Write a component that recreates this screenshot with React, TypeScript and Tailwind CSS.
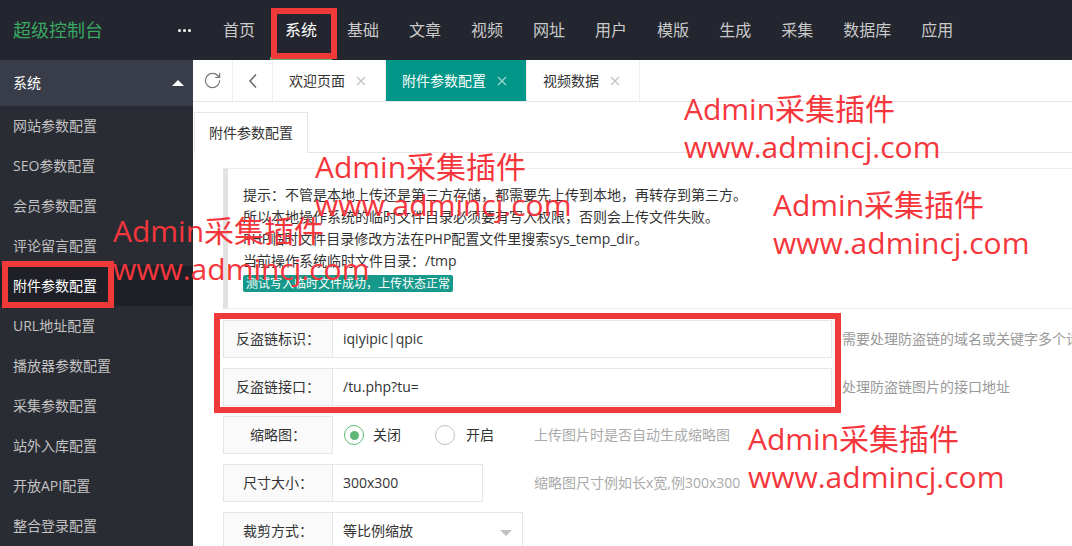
import { RotateCw } from "lucide-react";

// 顶部导航
const NAV_ITEMS = ["首页", "系统", "基础", "文章", "视频", "网址", "用户", "模版", "生成", "采集", "数据库", "应用"];

// 左侧菜单
const SIDE_ITEMS = [
  "网站参数配置",
  "SEO参数配置",
  "会员参数配置",
  "评论留言配置",
  "附件参数配置",
  "URL地址配置",
  "播放器参数配置",
  "采集参数配置",
  "站外入库配置",
  "开放API配置",
  "整合登录配置",
];

const TABS = ["欢迎页面", "附件参数配置", "视频数据"];

const NOTICE_LINES = [
  "提示：不管是本地上传还是第三方存储，都需要先上传到本地，再转存到第三方。",
  "所以本地操作系统的临时文件目录必须要有写入权限，否则会上传文件失败。",
  "PHP临时文件目录修改方法在PHP配置文件里搜索sys_temp_dir。",
  "当前操作系统临时文件目录：/tmp",
];

function CloseIcon({ className }: { className: string }) {
  return (
    <svg width="10" height="10" viewBox="0 0 10 10" className={className}>
      <path d="M1 1L9 9M9 1L1 9" stroke="currentColor" strokeWidth="1.3" fill="none" />
    </svg>
  );
}

function FieldLabel({ children }: { children: string }) {
  return (
    <div className="h-full w-[110px] shrink-0 border border-[#e6e6e6] bg-[#fafafa] text-center leading-[36px] text-[#333]">
      {children}
    </div>
  );
}

/** 红色水印文字 */
function Watermark({ className }: { className: string }) {
  return (
    <div
      className={`pointer-events-none absolute whitespace-nowrap font-['Open_Sans','Noto_Sans_CJK_SC',sans-serif] text-[30px] leading-[38px] text-[#f5363c] ${className}`}
    >
      <div>Admin采集插件</div>
      <div>www.admincj.com</div>
    </div>
  );
}

export default function App() {
  return (
    <div className="relative h-[546px] w-[1072px] overflow-hidden bg-white font-['Open_Sans','Noto_Sans_CJK_SC',sans-serif] text-[14px] leading-[20px] text-[#333]">
      {/* 顶部栏 */}
      <header className="flex h-[60px] items-center bg-[#23262e]">
        <div className="w-[170px] pl-[13px] text-[18px] leading-[24px] text-[#3aa862]">超级控制台</div>
        <div className="flex w-[28px] justify-center gap-[2px]">
          <span className="h-[3px] w-[3px] rounded-full bg-white" />
          <span className="h-[3px] w-[3px] rounded-full bg-white" />
          <span className="h-[3px] w-[3px] rounded-full bg-white" />
        </div>
        <nav className="ml-[10px] flex h-full">
          {NAV_ITEMS.map((item) => (
            <div
              key={item}
              className={`relative flex h-full items-center px-[15px] text-[16px] leading-[22px] ${
                item === "系统" ? "text-white" : "text-[#c9c9c9]"
              }`}
            >
              {item}
              {item === "系统" && <span className="absolute bottom-0 left-0 h-[3px] w-full bg-[#5fb878]" />}
            </div>
          ))}
        </nav>
      </header>

      <div className="flex h-[486px]">
        {/* 侧边栏 */}
        <aside className="w-[193px] shrink-0 bg-[#2a2c34]">
          <div className="flex h-[46px] items-center justify-between bg-[#393d49] pl-[13px] pr-[9px] text-white">
            <span>系统</span>
            <span className="h-0 w-0 border-x-[6px] border-b-[6px] border-x-transparent border-b-white" />
          </div>
          {SIDE_ITEMS.map((item) => (
            <div
              key={item}
              className={`flex h-[40px] items-center pl-[13px] ${
                item === "附件参数配置" ? "bg-[#1f2027] text-white" : "text-[#c2c2c2]"
              }`}
            >
              {item}
            </div>
          ))}
        </aside>

        <main className="min-w-0 flex-1 overflow-hidden">
          {/* 标签栏 */}
          <div className="flex h-[42px] border-b border-[#e6e6e6]">
            <div className="flex w-[40px] items-center justify-center border-r border-[#eee] text-[#777]">
              <RotateCw size={19} strokeWidth={1.5} />
            </div>
            <div className="flex w-[40px] items-center justify-center border-r border-[#eee] text-[#666]">
              <svg width="12" height="16" viewBox="0 0 12 16">
                <path d="M9 1.5L3 8l6 6.5" stroke="currentColor" strokeWidth="1.5" fill="none" />
              </svg>
            </div>
            {TABS.map((tab) => {
              const active = tab === "附件参数配置";
              return (
                <div
                  key={tab}
                  className={`flex items-center border-r border-[#eee] pl-[16px] pr-[19px] ${
                    active ? "bg-[#009688] text-white" : "text-[#333]"
                  }`}
                >
                  <span>{tab}</span>
                  <CloseIcon className={`ml-[11px] ${active ? "text-[#9fd6cf]" : "text-[#c2c2c2]"}`} />
                </div>
              );
            })}
          </div>

          <div className="pl-[1px] pt-[10px]">
            <div className="flex">
              <div className="h-[41px] border border-b-0 border-[#e6e6e6] px-[14px] leading-[40px]">附件参数配置</div>
              <div className="flex-1 border-b border-[#e6e6e6]" />
            </div>

            {/* 提示框 */}
            <div className="ml-[29px] mr-[-40px] mt-[15px] border border-l-[5px] border-[#eee] border-l-[#e2e2e2] pb-[16px] pl-[15px] pt-[15px] leading-[22px]">
              {NOTICE_LINES.map((line) => (
                <div key={line} className="whitespace-nowrap">
                  {line}
                </div>
              ))}
              <div className="mt-[3px] flex">
                <span className="rounded-[2px] bg-[#16998a] px-[3px] text-[12px] leading-[17px] text-white">
                  测试写入临时文件成功，上传状态正常
                </span>
              </div>
            </div>

            {/* 表单 */}
            <div className="ml-[29px] mt-[11px] flex flex-col gap-[10px]">
              <div className="flex h-[38px] items-center">
                <FieldLabel>反盗链标识：</FieldLabel>
                <div className="h-full w-[499px] shrink-0 border border-l-0 border-[#e6e6e6] pl-[10px] leading-[36px]">
                  iqiyipic|qpic
                </div>
                <div className="ml-[10px] whitespace-nowrap text-[#999]">需要处理防盗链的域名或关键字多个请用|连接</div>
              </div>
              <div className="flex h-[38px] items-center">
                <FieldLabel>反盗链接口：</FieldLabel>
                <div className="h-full w-[499px] shrink-0 border border-l-0 border-[#e6e6e6] pl-[10px] leading-[36px]">
                  /tu.php?tu=
                </div>
                <div className="ml-[10px] whitespace-nowrap text-[#999]">处理防盗链图片的接口地址</div>
              </div>
              <div className="flex h-[38px] items-center">
                <FieldLabel>缩略图：</FieldLabel>
                <div className="flex w-[201px] shrink-0 items-center pl-[11px]">
                  <span className="flex h-[20px] w-[20px] items-center justify-center rounded-full border border-[#5fb878]">
                    <span className="h-[9px] w-[9px] rounded-full bg-[#5fb878]" />
                  </span>
                  <span className="ml-[9px]">关闭</span>
                  <span className="ml-[34px] h-[20px] w-[20px] rounded-full border border-[#c2c2c2]" />
                  <span className="ml-[11px]">开启</span>
                </div>
                <div className="whitespace-nowrap text-[#aaa]">上传图片时是否自动生成缩略图</div>
              </div>
              <div className="flex h-[38px] items-center">
                <FieldLabel>尺寸大小：</FieldLabel>
                <div className="h-full w-[150px] shrink-0 border border-l-0 border-[#e6e6e6] pl-[10px] leading-[36px]">
                  300x300
                </div>
                <div className="ml-[51px] whitespace-nowrap text-[#aaa]">缩略图尺寸例如长x宽,例300x300</div>
              </div>
              <div className="flex h-[38px] items-center">
                <FieldLabel>裁剪方式：</FieldLabel>
                <div className="relative h-full w-[190px] shrink-0 border border-l-0 border-[#e6e6e6] pl-[10px] leading-[36px]">
                  等比例缩放
                  <span className="absolute right-[10px] top-[17px] h-0 w-0 border-x-[6px] border-t-[6px] border-x-transparent border-t-[#c2c2c2]" />
                </div>
              </div>
            </div>
          </div>
        </main>
      </div>

      {/* 红色标注框 */}
      <div className="pointer-events-none absolute left-[271px] top-[8px] h-[51px] w-[66px] border-[6px] border-[#f03a3a]" />
      <div className="pointer-events-none absolute left-[2px] top-[261px] h-[47px] w-[112px] border-[6px] border-[#f03a3a]" />
      <div className="pointer-events-none absolute left-[214px] top-[313px] h-[100px] w-[627px] border-[6px] border-[#f03a3a]" />

      {/* 水印 */}
      <Watermark className="left-[684px] top-[90px]" />
      <Watermark className="left-[315px] top-[148px]" />
      <Watermark className="left-[113px] top-[212px]" />
      <Watermark className="left-[773px] top-[186px]" />
      <Watermark className="left-[748px] top-[420px]" />
    </div>
  );
}
